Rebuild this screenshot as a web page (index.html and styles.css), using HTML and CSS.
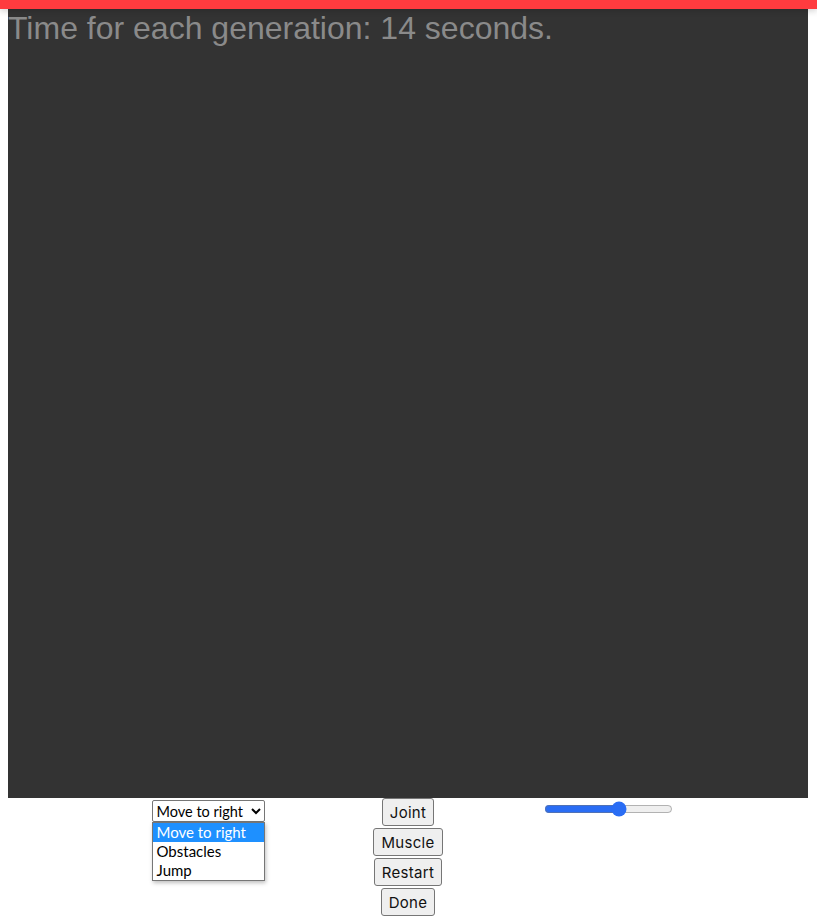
FILE: index.html
```html
<!DOCTYPE html>
<html>
<head>
<meta charset="utf-8">
<link rel="stylesheet" href="styles.css">
</head>
<body>
<div class="topbar"></div>
<div class="canvas">
  <div class="gen-time">Time for each generation: 14 seconds.</div>
</div>
<div class="controls">
  <div class="col">
    <div class="select-wrap">
      <select class="mode">
        <option>Move to right</option>
        <option>Obstacles</option>
        <option>Jump</option>
      </select>
      <ul class="dropdown">
        <li class="active">Move to right</li>
        <li>Obstacles</li>
        <li>Jump</li>
      </ul>
    </div>
  </div>
  <div class="col buttons">
    <button class="btn">Joint</button>
    <button class="btn">Muscle</button>
    <button class="btn">Restart</button>
    <button class="btn">Done</button>
  </div>
  <div class="col">
    <input class="slider" type="range" min="0" max="100" value="60">
  </div>
</div>
</body>
</html>
```

FILE: styles.css
```css
html, body {
  margin: 0;
  padding: 0;
  background: #fff;
}
body {
  margin: 8px;
  font-family: "Liberation Sans", Arial, sans-serif;
}
.topbar {
  position: fixed;
  top: 0;
  left: 0;
  right: 0;
  height: 9px;
  background: #ff3b3f;
  box-shadow: 0 2px 6px rgba(0,0,0,0.18);
  z-index: 5;
}
.canvas {
  width: 800px;
  height: 790px;
  background: #333333;
  overflow: hidden;
}
.gen-time {
  font-family: "Liberation Sans", Arial, sans-serif;
  font-size: 32px;
  line-height: 32px;
  color: #8a8a8a;
  padding-top: 4px;
  padding-left: 0;
}
.controls {
  display: grid;
  grid-template-columns: 200px 200px 200px;
  margin-left: 100px;
  width: 600px;
}
.col {
  display: flex;
  flex-direction: column;
  align-items: center;
}
.select-wrap {
  position: relative;
  margin-top: 2px;
}
.mode {
  font-family: Lato, "Noto Sans", sans-serif;
  font-size: 14.5px;
  width: 113px;
  height: 22px;
  margin: 0;
  padding: 0;
  border: 1px solid #767676;
  border-radius: 2px;
  background: #fff;
  color: #000;
}
.dropdown {
  position: absolute;
  top: 22px;
  left: 0;
  width: 111px;
  margin: 0;
  padding: 0;
  list-style: none;
  background: #fff;
  border: 1px solid #767676;
  box-shadow: 1px 2px 4px rgba(0,0,0,0.25);
  font-family: Lato, "Noto Sans", sans-serif;
  font-size: 15px;
  z-index: 3;
}
.dropdown li {
  height: 19px;
  line-height: 19px;
  padding-left: 4px;
  color: #000;
}
.dropdown li.active {
  background: #1e90ff;
  color: #fff;
}
.buttons {
  gap: 2px;
}
.btn {
  font-family: Inter, "Open Sans", sans-serif;
  font-size: 15px;
  height: 28px;
  padding: 0 7px;
  margin: 0;
  background: #efefef;
  color: #111;
  border: 1px solid #767676;
  border-radius: 3px;
  letter-spacing: 0.3px;
}
.slider {
  width: 129px;
  height: 16px;
  margin: 3px 0 0 0;
  accent-color: #2a6df4;
}
```
